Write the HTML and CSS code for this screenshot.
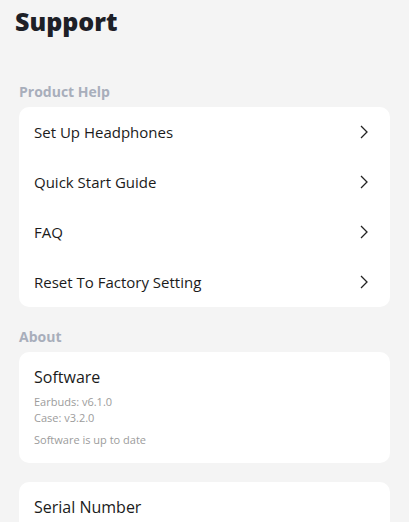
FILE: index.html
```html
<!DOCTYPE html>
<html lang="en">
<head>
    <meta charset="UTF-8">
    <meta name="viewport" content="width=device-width, initial-scale=1.0">
    <title>Support</title>
    <link rel="stylesheet" href="styles.css">
</head>
<body>
    <h1 class="page-title">Support</h1>

    <div class="section-label">Product Help</div>
    <div class="card">
        <div class="row">
            <span>Set Up Headphones</span>
            <svg class="chevron" width="8" height="14" viewBox="0 0 8 14"><polyline points="1,1 7,7 1,13" /></svg>
        </div>
        <div class="row">
            <span>Quick Start Guide</span>
            <svg class="chevron" width="8" height="14" viewBox="0 0 8 14"><polyline points="1,1 7,7 1,13" /></svg>
        </div>
        <div class="row">
            <span>FAQ</span>
            <svg class="chevron" width="8" height="14" viewBox="0 0 8 14"><polyline points="1,1 7,7 1,13" /></svg>
        </div>
        <div class="row">
            <span>Reset To Factory Setting</span>
            <svg class="chevron" width="8" height="14" viewBox="0 0 8 14"><polyline points="1,1 7,7 1,13" /></svg>
        </div>
    </div>

    <div class="section-label about-label">About</div>
    <div class="card info-card">
        <div class="info-title">Software</div>
        <div class="info-line">Earbuds: v6.1.0</div>
        <div class="info-line">Case: v3.2.0</div>
        <div class="info-line info-status">Software is up to date</div>
    </div>

    <div class="card info-card serial-card">
        <div class="info-title">Serial Number</div>
    </div>
</body>
</html>
```

FILE: styles.css
```css
body {
    margin: 0;
    padding: 0 19px 0 19px;
    background-color: #f4f4f4;
    font-family: "Open Sans", "Liberation Sans", sans-serif;
    color: #1b1b1b;
}
.page-title {
    margin: 3px 0 0 -4px;
    font-size: 25px;
    font-weight: 800;
    line-height: 36px;
    color: #1d2027;
}
.section-label {
    margin-top: 43px;
    margin-bottom: 5px;
    font-size: 14px;
    font-weight: 700;
    line-height: 20px;
    color: #a8aebb;
}
.about-label {
    margin-top: 20px;
}
.card {
    background: #ffffff;
    border-radius: 10px;
}
.row {
    display: flex;
    justify-content: space-between;
    align-items: center;
    height: 50px;
    padding: 0 22px 0 15px;
    font-size: 15px;
}
.chevron {
    fill: none;
    stroke: #222;
    stroke-width: 1.3;
}
.info-card {
    padding: 14px 15px 15px 15px;
}
.info-title {
    font-size: 16px;
    line-height: 22px;
    margin-bottom: 6px;
}
.info-line {
    font-size: 11px;
    line-height: 16px;
    color: #9c9c9c;
}
.info-status {
    margin-top: 6px;
}
.serial-card {
    margin-top: 19px;
    min-height: 60px;
}
```
